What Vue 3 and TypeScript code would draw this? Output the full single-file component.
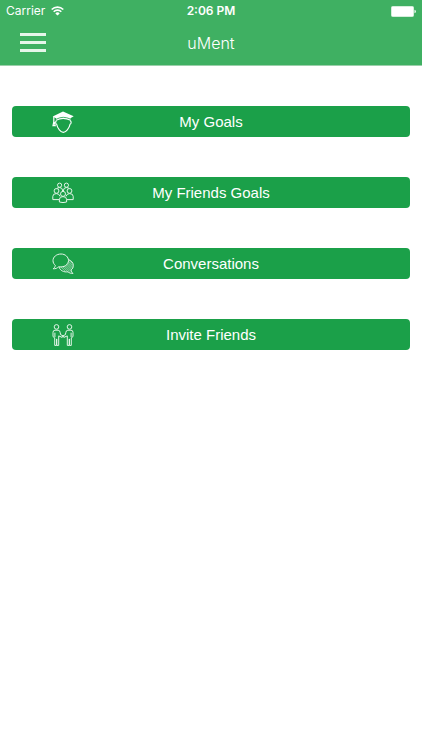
<script setup lang="ts">
type IconName = 'graduate' | 'group' | 'chat' | 'partners'

interface MenuItem {
  label: string
  icon: IconName
}

const items: MenuItem[] = [
  { label: 'My Goals', icon: 'graduate' },
  { label: 'My Friends Goals', icon: 'group' },
  { label: 'Conversations', icon: 'chat' },
  { label: 'Invite Friends', icon: 'partners' },
]
</script>

<template>
  <div class="app">
    <header class="header">
      <div class="status">
        <span class="carrier">
          Carrier
          <svg class="wifi" viewBox="0 0 13 10" aria-hidden="true">
            <path d="M0.7 3.5a8.2 8.2 0 0 1 11.6 0M2.7 5.7a5.4 5.4 0 0 1 7.6 0" fill="none" stroke="#fff" stroke-width="1.6" />
            <path d="M4.3 7.4a3.1 3.1 0 0 1 4.4 0l-2.2 2.2z" fill="#fff" />
          </svg>
        </span>
        <span class="time">2:06 PM</span>
        <svg class="battery" viewBox="0 0 25 11" aria-hidden="true">
          <rect x="0.5" y="0.5" width="22" height="10" rx="1" fill="#fff" stroke="#d5eedb" />
          <path d="M23.5 3.7q1.3 0.3 1.3 1.8t-1.3 1.8z" fill="#fff" />
        </svg>
      </div>
      <div class="navbar">
        <button class="menu" type="button" aria-label="Menu">
          <span class="bar"></span>
          <span class="bar"></span>
          <span class="bar"></span>
        </button>
        <h1 class="title">uMent</h1>
      </div>
    </header>

    <main class="list">
      <button v-for="item in items" :key="item.label" class="item" type="button">
        <svg v-if="item.icon === 'graduate'" class="icon" viewBox="0 0 22 22" aria-hidden="true">
          <path d="M11 0.5 21.7 5.3 18.4 7.3V9.8Q11 6.2 4.4 9.8V7.5L0.7 5.6z" fill="#fff" />
          <path d="M4.6 8.1Q11 4.6 18.2 8" fill="none" stroke="#1ba049" stroke-width="0.8" />
          <path d="M1.8 5.8V11.5M1.8 11 1 14.6h2.2l-1-3.6" fill="none" stroke="#fff" stroke-width="1.2" />
          <path d="M4.6 9.5C3.2 10.4 3.4 12.9 4.6 13.2 5.4 17.4 8.8 21.4 11.3 21.4s6-4 6.8-8.2c1.3-.3 1.5-2.8 0-3.7" fill="none" stroke="#fff" stroke-width="1.1" />
        </svg>

        <svg v-else-if="item.icon === 'group'" class="icon line" viewBox="0 0 22 22" aria-hidden="true">
          <circle cx="7.6" cy="3.2" r="2.1" />
          <circle cx="14.4" cy="3.2" r="2.1" />
          <path d="M4.6 6.8Q5.2 5.6 7.6 5.6 10.2 5.6 10.5 8v1.6M17.4 6.8Q16.8 5.6 14.4 5.6 11.8 5.6 11.5 8v1.6" />
          <circle cx="4.5" cy="8.9" r="2.4" />
          <circle cx="17.5" cy="8.9" r="2.4" />
          <circle cx="11" cy="11.9" r="2.5" />
          <path d="M7.3 17.6H.8V14.4Q.8 11.6 4.3 11.6q3 0 3.7 2.8M14.7 17.6h6.5v-3.2q0-2.8-3.5-2.8-3 0-3.7 2.8" />
          <path d="M7.4 20v-2.6q0-2.8 3.6-2.8t3.6 2.8V20q-3.6 1.2-7.2 0z" />
        </svg>

        <svg v-else-if="item.icon === 'chat'" class="icon line" viewBox="0 0 22 22" aria-hidden="true">
          <path d="M9 1C4.4 1 1 4 1 7.6c0 2 .9 3.6 2.3 4.7-.2 1.7-1 2.6-2.1 3.5 2.3.1 4-.6 5.3-2 5.5.9 10-2 10-6.2C16.5 4 13.3 1 9 1z" />
          <path d="M16.3 6.6c3 .8 5 3.1 5 5.8 0 2-.8 3.5-2.2 4.5.1 1.5.8 2.5 1.9 3.5-2.1.1-3.8-.4-5-1.6-4.2.7-8-1.4-9-4.8" />
          <path class="fine" d="M16.5 8.2 21 12.7M16 9.6l4.7 4.7M15.1 10.6l4.8 4.8M14.1 11.5l4.9 4.9M12.9 12.3l6.9 6.9M11.6 12.9l5.7 5.7M10 13.2l5.4 5.4M8.2 13.4l4.6 4.6M17.2 7l3.3 3.3" />
        </svg>

        <svg v-else class="icon line" viewBox="0 0 22 22" aria-hidden="true">
          <circle cx="4.5" cy="2.9" r="2.3" />
          <circle cx="17.5" cy="2.9" r="2.3" />
          <path d="M2.7 21.4V13.8L1 12.6V8.4Q1 6.2 3 6.2h3.1q1.8 0 2.1 2.4l.4 2.1L11 11.8l-.8 1.6-3.5-1.5v9.5H4.8v-6.4h-.3v6.4zM2.9 8.7V13" />
          <path d="M19.3 21.4V13.8l1.7-1.2V8.4Q21 6.2 19 6.2h-3.1q-1.8 0-2.1 2.4l-.4 2.1L11 11.8l.8 1.6 3.5-1.5v9.5h1.9v-6.4h.3v6.4zM19.1 8.7V13" />
        </svg>
        <span class="label">{{ item.label }}</span>
      </button>
    </main>
  </div>
</template>

<style>
body {
  margin: 0;
  background: #fff;
}
</style>

<style scoped>
.app {
  min-height: 100vh;
  background: #fff;
  color: #fff;
  font-family: "Liberation Sans", Arial, sans-serif;
}

.header {
  background: #3fb062;
  border-bottom: 1px solid #9bcfaa;
}

.status {
  display: grid;
  grid-template-columns: 1fr auto 1fr;
  align-items: center;
  height: 22px;
  padding: 0 6px;
  font-family: Inter, sans-serif;
  font-size: 12px;
  line-height: 22px;
}

.carrier {
  display: flex;
  align-items: center;
  gap: 6px;
}

.wifi {
  width: 13px;
  height: 10px;
}

.time {
  font-weight: 600;
}

.battery {
  justify-self: end;
  width: 25px;
  height: 11px;
}

.navbar {
  display: grid;
  grid-template-columns: 1fr auto 1fr;
  align-items: center;
  height: 40px;
  padding: 0 20px 3px;
}

.menu {
  display: flex;
  flex-direction: column;
  gap: 5px;
  width: 26px;
  margin: 0;
  padding: 0;
  border: 0;
  background: none;
  cursor: pointer;
}

.bar {
  height: 3px;
  background: #e6f6ea;
}

.title {
  margin: 0;
  padding-top: 2px;
  font-family: Inter, sans-serif;
  font-size: 16px;
  font-weight: 300;
  line-height: 22px;
}

.list {
  display: flex;
  flex-direction: column;
  gap: 40px;
  padding: 40px 12px;
}

.item {
  display: grid;
  grid-template-columns: 102px 1fr 102px;
  align-items: center;
  height: 31px;
  margin: 0;
  padding: 0;
  border: 0;
  border-radius: 4px;
  background: #1ba049;
  color: #fff;
  font: inherit;
  cursor: pointer;
}

.icon {
  justify-self: center;
  width: 22px;
  height: 22px;
}

.line {
  fill: none;
  stroke: #e2f5e7;
  stroke-width: 1;
  stroke-linejoin: round;
}

.fine {
  stroke-width: 0.6;
}

.label {
  font-size: 15px;
  line-height: 20px;
  text-align: center;
}
</style>
